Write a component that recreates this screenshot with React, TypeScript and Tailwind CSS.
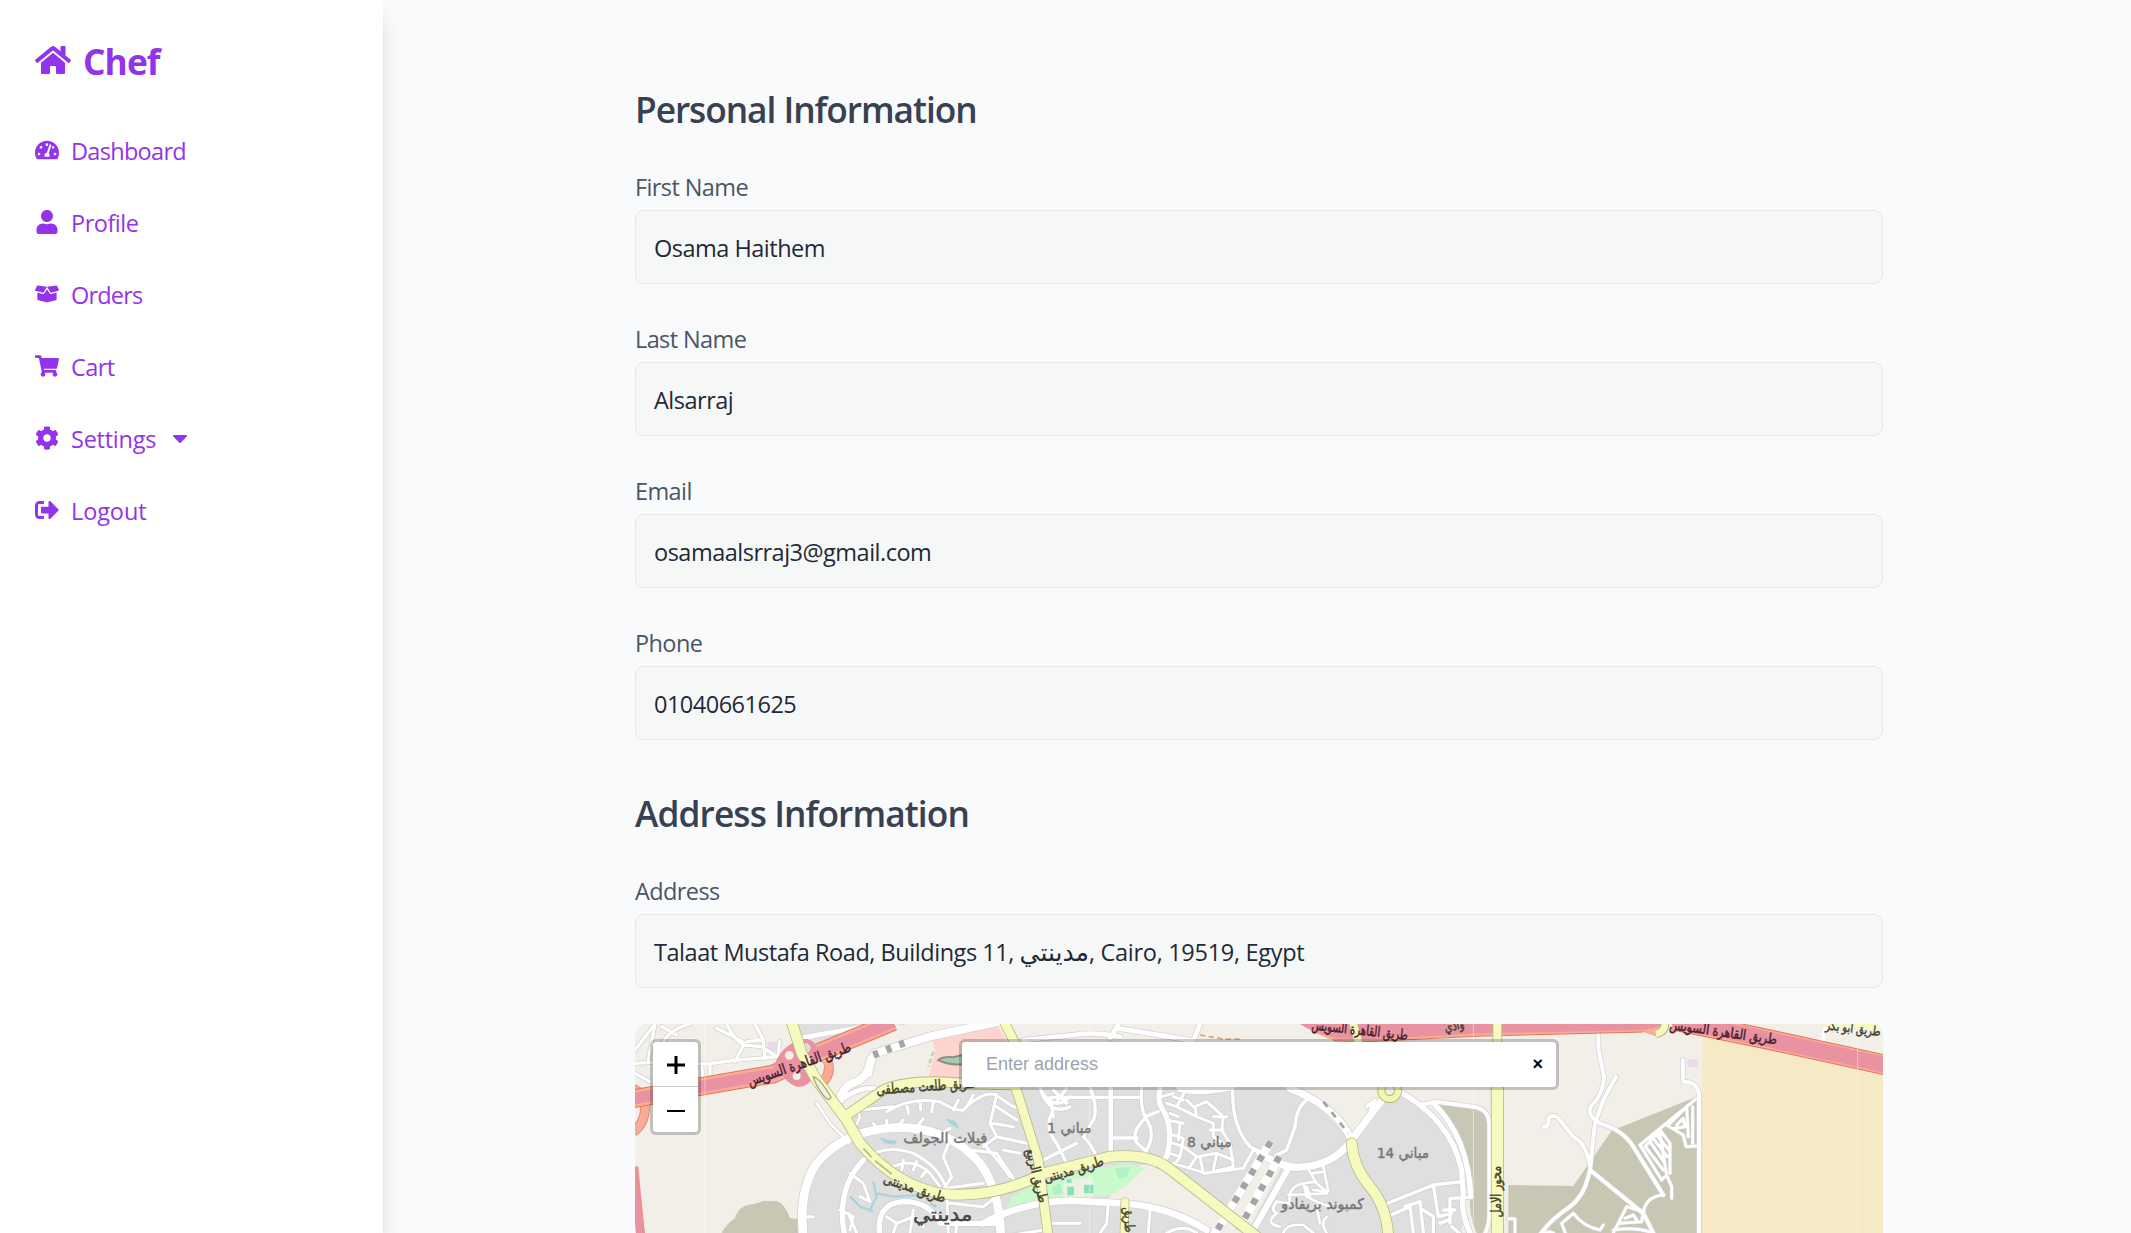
import React from 'react';
import {
  FaHome,
  FaTachometerAlt,
  FaUser,
  FaBoxOpen,
  FaShoppingCart,
  FaCog,
  FaSignOutAlt,
  FaCaretDown,
} from 'react-icons/fa';

const NAV = [
  { label: 'Dashboard', Icon: FaTachometerAlt, tracking: 'tracking-[-0.7px]' },
  { label: 'Profile', Icon: FaUser, tracking: 'tracking-[-0.5px]' },
  { label: 'Orders', Icon: FaBoxOpen, tracking: 'tracking-[-0.8px]' },
  { label: 'Cart', Icon: FaShoppingCart, tracking: 'tracking-[-0.6px]' },
  { label: 'Settings', Icon: FaCog, tracking: 'tracking-[-0.25px]', caret: true },
  { label: 'Logout', Icon: FaSignOutAlt, tracking: 'tracking-[-0.1px]' },
];

function Sidebar() {
  return (
    <aside className="relative z-10 w-[383px] shrink-0 bg-white px-[35px] pt-[34px] text-[#9333ea] shadow-[0_15px_22px_-4px_rgba(0,0,0,0.14),0_6px_9px_-4px_rgba(0,0,0,0.12)]">
      <div className="flex h-[54px] items-center gap-3">
        <FaHome className="mb-0.5 size-9" />
        <span className="text-[35.3px] leading-[54px] font-bold tracking-[-0.9px]">Chef</span>
      </div>
      <nav className="mt-[45px] flex flex-col gap-9">
        {NAV.map(({ label, Icon, tracking, caret }) => (
          <a key={label} className="flex h-9 items-center gap-3">
            <Icon className="mb-0.5 size-6" />
            <span className={`text-[23.5px] leading-9 ${tracking}`}>{label}</span>
            {caret && <FaCaretDown className="mb-0.5 size-6" />}
          </a>
        ))}
      </nav>
    </aside>
  );
}

function Field({ label, children }: { label: string; children: React.ReactNode }) {
  return (
    <div>
      <div className="text-[23.5px] leading-9 tracking-[-0.6px] text-[#4b5563]">{label}</div>
      <div className="mt-[5px] flex h-[74px] items-center rounded-[9px] border border-[#e5e7eb] bg-[#f6f8f7] pt-[3px] pl-[18px] text-[23.5px] tracking-[-0.5px] whitespace-pre text-[#1f2937]">
        {children}
      </div>
    </div>
  );
}

type Road = [x: number, y: number, w: number, d: string];

const WHITE_ROADS: Road[] = [
  // north-west interchange quarter
  [0, 0, 10, 'M15 120L75 42M75 42L55 150M15 190L60 215M15 160L110 155L230 162L320 150L445 140L448 95M180 42Q110 60 95 110M95 50L140 75M290 42Q310 85 340 105L395 110L440 140M375 42L400 90L405 145M340 105L315 155M400 90L350 95M215 165L218 205M240 165L240 200M260 55Q330 90 345 100'],
  [0, 0, 24, 'M715 190Q720 150 735 130L905 78L1200 15M630 270Q640 225 680 215Q715 200 722 150'],
  [0, 0, 14, 'M505 85L730 45L860 30M640 265Q690 230 735 235M1180 90L1330 75Q1400 65 1470 80M1440 85L1465 42M1465 55L1690 92M1690 92L1710 42'],
  [0, 0, 8, 'M560 280L600 340L650 390M655 400L690 320L680 300'],
  // golf villas
  [0, 0, 26, 'M520 680Q505 540 560 460Q640 360 800 352Q960 352 1050 460Q1110 540 1112 680'],
  [0, 0, 16, 'M645 680Q615 540 700 450M750 680Q735 580 820 575Q900 575 930 640L1110 640'],
  [0, 0, 9, 'M770 305Q840 260 930 275Q980 305 1000 300Q1060 240 1100 255M690 300L790 290M830 280L835 310M870 272L872 300M910 275L905 305M970 300L985 270M1010 290L1030 255M1100 255L1080 340L1100 380L1190 400M1085 340L1150 350M1100 380L1060 410M1105 260L1150 290L1190 300M1100 290L1160 330M750 365L730 340M800 352L820 330M860 352L880 325M930 372L960 355M770 355L770 330M1020 420L1100 430L1160 520M1060 400L1110 460L1140 500M960 390L940 440L965 500L940 540M1120 420L1170 430'],
  [0, 0, 9, 'M700 450Q760 400 850 430Q930 470 950 540L955 670M790 470Q850 440 900 490L930 530M820 450L815 480M860 455L850 480M890 480L875 500M950 535L1060 520M750 440L770 460M960 580L1060 590L1100 560M660 490L700 520L720 575L690 560M630 600L670 620L660 660M770 620L800 640L790 669M800 640L850 620L880 650M850 600L840 669M1120 680L1240 660M655 610L680 669M550 620L520 620M980 645L975 690'],
  // first cluster
  [1260, 0, 14, 'M182 230L182 430'],
  [1260, 0, 10, 'M0 262L275 262M182 384L262 384M-30 235Q10 310 60 260M10 240L50 280M50 235L20 275M60 290Q0 320 -30 235M275 230Q270 290 285 320Q320 370 290 420L278 440M285 320L325 305M285 325Q240 370 262 400L290 425M120 230Q145 300 130 330L100 380Q130 410 138 440M10 300Q-20 350 20 400L50 460M-20 450L80 400M0 262L10 320'],
  [1260, 0, 16, 'M330 235Q320 280 345 310Q370 370 350 440L330 460'],
  [1260, 0, 9, 'M410 235L380 290L350 280M380 290L440 320L435 290L470 275L520 320L515 360L540 400L550 470L470 490L370 460M440 320L490 340L490 380L520 400M350 330L400 340M355 370L400 385L390 440L360 430M390 340L385 390M370 400L400 410M490 320L530 320M480 360L520 360M430 290L410 270M400 410L440 440L420 470M440 440L500 430L550 450M500 430L490 480M370 260L400 270M360 310L385 320M335 260L370 250M450 440L460 490L540 480L580 475L610 420L640 430M390 440L370 470'],
  // ring district
  [1260, 0, 22, 'M390 235Q450 250 545 230M720 235Q860 290 905 390Q850 470 740 472Q690 470 630 430M905 390L1000 265'],
  [1260, 0, 10, 'M548 235Q545 350 600 410L640 430M770 270Q740 290 735 350L710 420L680 435L670 460M960 300L975 270L950 290'],
  [1260, 0, 18, 'M715 475L605 669'],
  [1260, 0, 8, 'M770 470L800 520L830 545M820 470L835 545L790 540M785 490L825 485M795 515L760 520Q710 530 720 580L680 575M760 520L770 560L800 575L840 590M715 555L830 550M770 530L780 560M680 575Q660 600 680 610Q640 640 690 650M700 669Q710 640 760 645L790 669M830 620Q810 640 830 669M800 590L810 640'],
  [1260, 0, 20, 'M-200 640Q-80 575 60 572L220 580Q360 590 470 660'],
  [1260, 0, 9, 'M175 580L170 640L150 669M0 640L90 640M300 600L295 669M0 640L-20 669M350 669Q400 640 440 669'],
  // eastern arc
  [1260, 0, 16, 'M1030 235Q1200 320 1235 480L1240 560Q1230 600 1260 669M1150 280Q1255 380 1262 560'],
  [1260, 0, 12, 'M1110 285L1160 275L1280 292Q1315 300 1318 340L1318 610Q1318 650 1300 680'],
  [1260, 0, 10, 'M1000 585L1150 525L1235 515M1150 525L1165 620L1205 610M1010 620L1080 590L1090 669M1065 590L1110 575L1120 669M1120 600L1150 620L1150 669M1170 640L1195 630M1260 562L1200 565L1200 640M1180 600L1215 600M1205 650L1240 680'],
  // outskirts
  [2520, 0, 12, 'M384 60L386 120L402 200Q400 250 370 280Q340 310 390 340Q460 360 490 410L580 555M438 200L400 270L375 340L360 480L355 500Q340 560 300 590Q240 630 205 680M360 480L520 610L550 669M220 352Q240 350 235 325Q250 310 265 325L310 380Q350 400 360 470M638 150L640 215Q680 215 687 250L687 680'],
  [2520, 0, 9, 'M510 405L680 265M510 405L575 510L590 495L570 370M525 410L570 360L600 400L600 490M590 345L640 375L648 410L687 408M600 340L650 290L655 380M620 345L640 325L645 350L615 355M668 290L668 400M590 495L605 530L605 565M580 555Q525 560 520 610M540 395L585 460M550 385L592 440M560 375L597 420M530 415L580 480M470 590L520 605L515 635L450 640M470 590L430 669M465 625L490 615L500 630M430 660Q500 650 550 669M275 640L310 610Q340 650 390 660L400 645M275 640L290 680M210 680Q240 650 260 680M115 626L135 626L135 680'],
];

const YELLOW_ROADS: Road[] = [
  [0, 0, 30, 'M483 30L515 130L560 210L650 330L690 400Q800 530 940 552Q1100 565 1240 490L1440 440Q1550 430 1610 470L1790 610L1880 680'],
  [0, 0, 28, 'M650 315L760 240Q840 205 1000 220L1160 225'],
  [0, 0, 26, 'M1120 30L1155 100M1155 225L1225 450L1255 680'],
  [1260, 0, 30, 'M905 400Q910 470 960 530Q1010 590 1015 680'],
  [1260, 0, 22, 'M225 575L222 680'],
  [1260, 0, 22, 'M910 42L925 95'],
  [2520, 0, 34, 'M82 225L82 680'],
  [2520, 0, 24, 'M82 30L82 110'],
];

function Roads({ roads, casing, fill, edge }: { roads: Road[]; casing: string; fill: string; edge: number }) {
  return (
    <g fill="none" strokeLinejoin="round" strokeLinecap="round">
      {roads.map(([x, y, w, d]) => (
        <path key={`c${d}`} d={d} transform={`translate(${x} ${y})`} stroke={casing} strokeWidth={w + edge} />
      ))}
      {roads.map(([x, y, w, d]) => (
        <path key={`f${d}`} d={d} transform={`translate(${x} ${y})`} stroke={fill} strokeWidth={w} />
      ))}
    </g>
  );
}

// [text, centre x, baseline y, rotation, drawn length, size, colour]
const LABELS: [string, number, number, number, number, number, string][] = [
  ['طريق القاهرة السويس', 512, 176, -19, 325, 44, '#4a2030'],
  ['طريق طلعت مصطفى', 890, 243, -4, 300, 44, '#45452c'],
  ['طريق مدينتى', 850, 548, 18, 195, 42, '#45452c'],
  ['طريق الربيع', 1208, 500, 76, 165, 40, '#45452c'],
  ['طريق مدينتى', 1335, 492, -17, 185, 42, '#45452c'],
  ['طريق', 1484, 630, 88, 75, 42, '#45452c'],
  ['فيلات الجولف', 946, 400, 0, 252, 44, '#777'],
  ['مدينتي', 938, 632, 0, 178, 58, '#444'],
  ['مباني 1', 1318, 368, 0, 132, 44, '#777'],
  ['مباني 8', 1738, 410, 0, 134, 44, '#777'],
  ['مباني 14', 2319, 443, 0, 156, 44, '#777'],
  ['كمبوند بريفادو', 2078, 596, 0, 248, 44, '#777'],
  ['طريق القاهرة السويس', 2188, 74, 6, 290, 42, '#4a2030'],
  ['وادي', 2475, 60, -12, 60, 40, '#45452c'],
  ['طريق القاهرة السويس', 3278, 80, 8, 325, 42, '#4a2030'],
  ['طريق أبو بكر', 3668, 68, 7, 165, 38, '#45452c'],
  ['محور الامل', 2612, 545, -90, 155, 44, '#45452c'],
];

function MapArt() {
  return (
    <svg viewBox="15 42 3744 627" className="block h-[209px] w-full" preserveAspectRatio="none">
      <rect x="0" y="0" width="3780" height="700" fill="#f2efe9" />
      {/* residential ground */}
      <path d="M505 690L520 560L570 460L650 390L665 320L790 230L1140 215L1190 180L2010 235L2165 390L2265 250L2320 250Q2490 340 2500 520L2510 690Z" fill="#dfdfdf" />
      <path d="M500 42H690L560 90L505 85Z M530 95L640 60L620 110Z" fill="#dfdfdf" />
      <path d="M1530 465Q1580 455 1620 500L1780 620L1740 680Q1620 600 1425 575Z" fill="#f2efe9" />
      <path d="M1905 450L1960 460L1840 690H1760Z" fill="#f2efe9" />
      <path d="M2040 240H2245L2160 380Z" fill="#f2efe9" />
      <path d="M2420 300Q2500 380 2510 560L2490 690H2520V340Z" fill="#f2efe9" />
      {/* scrub */}
      <path d="M275 669Q290 640 315 625Q325 585 370 583Q385 578 400 573H440Q465 580 480 625L507 628V690H275Z" fill="#c8c7b4" />
      <path d="M2430 285L2560 300Q2578 320 2576 400V640L2560 669H2540Q2515 620 2520 540Q2510 400 2430 285Z" fill="#c8c7b4" />
      <path d="M2635 525L2830 528L2945 362L3200 260V690H2635Z" fill="#c8c7b4" />
      <path d="M3220 42L3208 680H3780V150L3220 60Z" fill="#f5e9c6" />
      {/* parks, water and parking */}
      <path d="M905 75L1100 42L1150 130V215L895 205L915 130Z" fill="#ffd3ce" />
      <path d="M925 150Q940 138 970 142L1010 132L1005 162Q960 168 925 150Z" fill="#aacbaf" stroke="#8b8f85" strokeWidth="6" />
      <path d="M910 125L895 170" stroke="#b9d9a4" strokeWidth="8" strokeDasharray="14 8" fill="none" />
      <path d="M1122 610L1145 560L1230 520L1400 475L1500 462L1545 475L1480 535L1430 558L1260 560Z" fill="#c8facc" />
      <path d="M1300 512L1390 500V560H1300Z" fill="#eef0e0" />
      <path d="M1312 530H1332V556H1312Z M1362 524H1390V550H1362Z M1310 508H1325V518H1310Z" fill="#88e0be" />
      <path d="M1455 475L1500 470L1490 500L1465 505Z M1265 530L1290 520L1300 550L1270 555Z" fill="#b0f2c0" />
      <path d="M948 326Q980 325 988 356Q965 350 948 326Z M745 380L775 390L800 392L795 404L765 400Z" fill="#aad3df" />
      <path d="M660 560L690 590L720 600L740 560L730 515M740 550L790 560L880 555M690 590L730 605M900 580L920 590" fill="none" stroke="#aad3df" strokeWidth="7" />
      <path d="M412 96H450V125H412Z M3172 147H3202V172H3172Z" fill="#ead9e8" />

      <Roads roads={WHITE_ROADS} casing="#cfcfd1" fill="#ffffff" edge={4} />

      {/* covered and tunnel segments */}
      <g fill="none" stroke="#a5a5a5">
        <path d="M1922 395L1750 680M1948 440L1825 660" stroke="#ffffff" strokeWidth="24" />
        <path d="M1922 395L1750 680M1948 440L1825 660" strokeWidth="20" strokeDasharray="20 28" />
        <path d="M730 135L840 92" strokeWidth="22" strokeDasharray="16 26" />
        <path d="M2080 275L2155 370" strokeWidth="9" strokeDasharray="20 20" />
      </g>
      <g fill="none" stroke="#d9a36a" strokeWidth="5" strokeDasharray="16 10">
        <path d="M1710 75L1780 87H1830" />
      </g>

      {/* Cairo–Suez road */}
      <g fill="none">
        <path d="M0 235Q45 245 45 290Q45 340 10 365M590 150Q610 190 570 225" stroke="#dd8b79" strokeWidth="30" />
        <path d="M0 235Q45 245 45 290Q45 340 10 365M590 150Q610 190 570 225" stroke="#f9ab94" strokeWidth="24" />
        <path d="M0 268L210 230L430 192L560 130L790 35" stroke="#e2745c" strokeWidth="56" />
        <path d="M0 268L210 230L430 192L560 130L790 35" stroke="#f9ab94" strokeWidth="50" />
        <path d="M0 268L210 230L430 192L560 130L790 35" stroke="#e892a2" strokeWidth="34" />
        <path d="M12 470L32 680" stroke="#e892a2" strokeWidth="26" />
        <path d="M20 480L44 680" stroke="#f28f77" strokeWidth="4" />
        <path d="M430 190Q450 100 530 90Q570 105 560 150Q550 230 500 226Q470 215 460 190Z" fill="#e892a2" stroke="#e892a2" strokeWidth="8" />
        <path d="M3130 30L3400 85L3780 168" stroke="#e2745c" strokeWidth="62" />
        <path d="M3130 30L3400 85L3780 168" stroke="#f9ab94" strokeWidth="56" />
        <path d="M3130 30L3400 85L3780 168" stroke="#e892a2" strokeWidth="46" />
      </g>
      <g fill="#f2efe9">
        <circle cx="478" cy="136" r="13" />
        <circle cx="528" cy="114" r="14" fill="#dfdfdf" />
        <circle cx="500" cy="198" r="12" />
        <circle cx="568" cy="168" r="14" />
      </g>
      <path d="M2010 42Q2060 75 2110 90L2210 94L2560 77L3040 66L3080 80L3110 42Z" fill="#f9ab94" />
      <path d="M2010 42Q2060 70 2120 84L2210 88L2560 70L3040 60L3120 42Z" fill="#e892a2" />
      <path d="M2110 92L2210 95L2560 78L3040 66" fill="none" stroke="#e2745c" strokeWidth="3" />

      <Roads roads={YELLOW_ROADS} casing="#b9bb86" fill="#f7fabf" edge={5} />
      <path d="M550 200Q570 205 603 262Q598 275 585 262Q555 225 550 200Z" fill="#f2efe9" stroke="#a6a77c" strokeWidth="4" />
      <path d="M700 415L725 442M735 452L785 492" stroke="#b9bb86" strokeWidth="5" fill="none" />
      <circle cx="2279" cy="242" r="25" fill="#efefe8" stroke="#b9bb86" strokeWidth="24" />
      <circle cx="2279" cy="242" r="25" fill="none" stroke="#f3f7ac" strokeWidth="18" />
      <path d="M3078 72Q3105 65 3105 42" fill="none" stroke="#b9bb86" strokeWidth="26" />
      <path d="M3078 72Q3105 65 3105 42" fill="none" stroke="#f7fabf" strokeWidth="20" />
      <path d="M3560 42L3680 50L3760 66V42Z" fill="#f7fabf" />
      <path d="M3586 52L3578 92" stroke="#ffffff" strokeWidth="12" />

      {/* tile seams */}
      <path d="M225 42V669M1379 42V669M2530 42V669M3683 42V669" stroke="#ffffff" strokeOpacity="0.45" strokeWidth="3" />

      <g fontFamily='"DejaVu Sans", sans-serif' textAnchor="middle">
        {LABELS.map(([t, x, y, r, len, size, color], i) => (
          <text
            key={i}
            transform={`translate(${x} ${y}) rotate(${r})`}
            fontSize={size}
            fill={color}
            stroke={color}
            strokeWidth="1.4"
            textLength={len}
            lengthAdjust="spacingAndGlyphs"
          >
            {t}
          </text>
        ))}
      </g>
    </svg>
  );
}

function AddressMap() {
  return (
    <div className="relative h-[209px] overflow-hidden rounded-t-[12px] bg-[#f2efe9]">
      <MapArt />
      <div className="absolute top-[15px] left-[15px] w-[51px] rounded-[6px] border-[3px] border-black/20 bg-white bg-clip-padding">
        <button className="flex h-[45px] w-full items-center justify-center border-b border-[#ccc] pt-[2px]">
          <svg viewBox="0 0 18 18" className="size-[18px]" stroke="#000" strokeWidth="3">
            <path d="M0 9H18M9 0V18" />
          </svg>
        </button>
        <button className="flex h-[45px] w-full items-center justify-center">
          <svg viewBox="0 0 18 18" className="size-[18px]" stroke="#000" strokeWidth="2">
            <path d="M0 10H18" />
          </svg>
        </button>
      </div>
      <div className="absolute top-[15px] left-[324px] flex h-[51px] w-[600px] items-center justify-between rounded-[6px] border-[3px] border-black/20 bg-white bg-clip-padding pr-[13px] pl-6 font-['Liberation_Sans',Arial,sans-serif]">
        <span className="text-[18px] text-[#9ca3af]">Enter address</span>
        <span className="mb-0.5 text-[18px] leading-none font-bold text-black">×</span>
      </div>
    </div>
  );
}

export default function App() {
  return (
    <div className="flex h-screen overflow-hidden bg-[#f9fafc] font-['Open_Sans','Noto_Sans',sans-serif]">
      <Sidebar />
      <main className="flex-1 pt-[82px] pl-[252px]">
        <div className="w-[1248px]">
          <h2 className="text-[35.3px] leading-[54px] font-semibold tracking-[-1.05px] text-[#374151]">
            Personal Information
          </h2>
          <div className="mt-[33px] flex flex-col gap-[37px]">
            <Field label="First Name">Osama Haithem</Field>
            <Field label="Last Name">Alsarraj</Field>
            <Field label="Email">osamaalsrraj3@gmail.com</Field>
            <Field label="Phone">01040661625</Field>
          </div>
          <h2 className="mt-[46px] mb-[33px] text-[35.3px] leading-[54px] font-semibold tracking-[-0.9px] text-[#374151]">
            Address Information
          </h2>
          <Field label="Address">
            <span className="tracking-[-0.45px]">Talaat Mustafa Road, Buildings 11, </span>
            <span className="font-['DejaVu_Sans',sans-serif] text-[25px] tracking-normal">مدينتي</span>
            <span className="tracking-[-0.3px]">, Cairo, 19519, Egypt</span>
          </Field>
          <div className="mt-9">
            <AddressMap />
          </div>
        </div>
      </main>
    </div>
  );
}
